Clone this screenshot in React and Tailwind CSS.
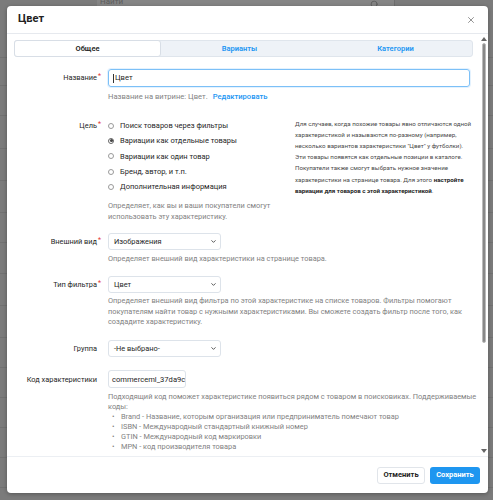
import React from "react";
import { ChevronDown, Search, X } from "lucide-react";

const Req = () => (
  <span className="text-[#e53935] text-[7px] relative top-[-2px] ml-[1px]">*</span>
);

function Label({ children, req, top = "pt-[4px]" }) {
  return (
    <div className={`w-[87px] shrink-0 text-right text-[7.4px] leading-[10px] text-[#262626] ${top}`}>
      {children}
      {req ? <Req /> : <span className="inline-block w-[4px]" />}
    </div>
  );
}

function Select({ value }) {
  return (
    <div className="w-[113px] h-[17px] border border-[#dde3ea] rounded-[3px] flex items-center justify-between pl-[5px] pr-[3px] text-[7.4px] text-[#262626] bg-white">
      <span>{value}</span>
      <ChevronDown size={7} strokeWidth={3} className="text-[#444]" />
    </div>
  );
}

function Radio({ label, checked }) {
  return (
    <div className="h-[15.3px] flex items-center gap-[6px] text-[7.5px] text-[#262626]">
      <span
        className={`w-[6px] h-[6px] rounded-full border flex items-center justify-center ${
          checked ? "border-[#666]" : "border-[#9a9a9a]"
        }`}
      >
        {checked && <span className="w-[3px] h-[3px] rounded-full bg-[#444]" />}
      </span>
      <span>{label}</span>
    </div>
  );
}

const help = "text-[7.4px] text-[#828282]";

export default function App() {
  const rows = [57, 85, 115, 148, 180, 212, 242, 273, 305, 337, 367, 397, 427, 457, 487];

  return (
    <div className="relative w-[493px] h-[500px] overflow-hidden bg-[#7b7b7b] font-['Roboto',sans-serif]">
      {/* page behind the overlay */}
      <div className="flex h-[20px]">
        <div className="w-[97px] bg-[#7b7b7b]" />
        <div className="w-[298px] bg-[#858585] border-r border-[#6e6e6e] flex items-start justify-between px-[3px] text-[8px] text-[#5c5c5c] -mt-[4px]">
          <span>Найти</span>
          <Search size={9} className="mt-[4px] mr-[12px] text-[#555]" />
        </div>
      </div>
      {rows.map((y) => (
        <div key={y} className="absolute left-0 w-[493px] h-px bg-[#717171]" style={{ top: y }} />
      ))}

      {/* modal */}
      <div className="absolute left-[7px] top-[6px] w-[481px] h-[487px] bg-white rounded-[4px] shadow-[0_1px_4px_rgba(0,0,0,0.3)] flex flex-col overflow-hidden">
        <div className="h-[28px] shrink-0 border-b border-[#e6e9ee] flex items-center justify-between pl-[11px] pr-[12px]">
          <span className="text-[11px] font-bold text-[#222]">Цвет</span>
          <X size={10} strokeWidth={1.5} className="text-[#555]" />
        </div>

        <div className="flex-1 min-h-0 flex">
          <div className="flex-1 min-w-0 overflow-hidden pl-[7px] pr-[3px] pt-[6px]">
            {/* tabs */}
            <div className="h-[17px] mr-[4px] grid grid-cols-[145px_159px_1fr] bg-[#eef2f7] border border-[#dfe5ec] rounded-[3px] text-[7.5px] font-semibold">
              <div className="bg-white border border-[#d8dee6] rounded-[3px] flex items-center justify-center text-[#222] -m-px">
                Общее
              </div>
              <div className="flex items-center justify-center text-[#2196f3]">Варианты</div>
              <div className="flex items-center justify-center text-[#2196f3]">Категории</div>
            </div>

            {/* name */}
            <div className="flex gap-[7px] mt-[12px]">
              <Label req>Название</Label>
              <div className="flex-1 pr-[7px]">
                <div className="h-[18px] border border-[#7cc0f7] rounded-[3px] shadow-[0_0_0_1px_rgba(33,150,243,0.12)] flex items-center px-[4px] text-[7.6px] text-[#262626]">
                  <span className="w-px h-[9px] bg-[#333] mr-px" />
                  Цвет
                </div>
                <div className="mt-[4px] text-[7.6px] leading-[11px]">
                  <span className="text-[#828282]">Название на витрине: Цвет.</span>
                  <span className="text-[#2196f3] font-medium ml-[5px]">Редактировать</span>
                </div>
              </div>
            </div>

            {/* purpose */}
            <div className="flex gap-[7px] mt-[16px]">
              <Label req top="pt-[2.6px]">Цель</Label>
              <div className="w-[178px] shrink-0">
                <Radio label="Поиск товаров через фильтры" />
                <Radio label="Вариации как отдельные товары" checked />
                <Radio label="Вариации как один товар" />
                <Radio label="Бренд, автор, и т.п." />
                <Radio label="Дополнительная информация" />
                <p className={`${help} leading-[11px] mt-[5.5px]`}>
                  Определяет, как вы и ваши покупатели смогут использовать эту характеристику.
                </p>
              </div>
              <p className="ml-[2px] text-[6.2px] leading-[11.2px] text-[#4a4a4a] pt-[0.5px] whitespace-nowrap">
                Для случаев, когда похожие товары явно отличаются одной
                <br />
                характеристикой и называются по-разному (например,
                <br />
                несколько вариантов характеристики "Цвет" у футболки).
                <br />
                Эти товары появятся как отдельные позиции в каталоге.
                <br />
                Покупатели также смогут выбрать нужное значение
                <br />
                характеристики на странице товара. Для этого{" "}
                <b className="text-[#222]">настройте</b>
                <br />
                <b className="text-[#222]">вариации для товаров с этой характеристикой</b>.
              </p>
            </div>

            {/* appearance */}
            <div className="flex gap-[7px] mt-[11.5px]">
              <Label req>Внешний вид</Label>
              <div className="flex-1">
                <Select value="Изображения" />
                <p className={`${help} leading-[11px] mt-[2.5px]`}>
                  Определяет внешний вид характеристики на странице товара.
                </p>
              </div>
            </div>

            {/* filter type */}
            <div className="flex gap-[7px] mt-[12.5px]">
              <Label req>Тип фильтра</Label>
              <div className="flex-1 pr-[4px]">
                <Select value="Цвет" />
                <p className={`${help} leading-[10.5px] mt-[2.75px]`}>
                  Определяет внешний вид фильтра по этой характеристике на списке товаров. Фильтры
                  помогают покупателям найти товар с нужными характеристиками. Вы сможете создать
                  фильтр после того, как создадите характеристику.
                </p>
              </div>
            </div>

            {/* group */}
            <div className="flex gap-[7px] mt-[12.75px]">
              <Label>Группа</Label>
              <div className="flex-1">
                <Select value="-Не выбрано-" />
              </div>
            </div>

            {/* code */}
            <div className="flex gap-[7px] mt-[13px]">
              <Label top="pt-[4.5px]">Код характеристики</Label>
              <div className="flex-1">
                <div className="w-[78px] h-[18px] border border-[#dde3ea] rounded-[3px] flex items-center px-[3px] text-[7.6px] text-[#262626] overflow-hidden whitespace-nowrap">
                  commerceml_37da9c2
                </div>
                <div className={`${help} leading-[10px] mt-[4px]`}>
                  <p>
                    Подходящий код поможет характеристике появиться рядом с товаром в поисковиках.
                    Поддерживаемые коды:
                  </p>
                  <ul>
                    {[
                      "Brand - Название, которым организация или предприниматель помечают товар",
                      "ISBN - Международный стандартный книжный номер",
                      "GTIN - Международный код маркировки",
                      "MPN - код производителя товара",
                    ].map((t) => (
                      <li key={t} className="flex">
                        <span className="w-[13px] pl-[4px] shrink-0">•</span>
                        <span>{t}</span>
                      </li>
                    ))}
                  </ul>
                </div>
              </div>
            </div>
          </div>

          {/* scrollbar */}
          <div className="w-[8px] shrink-0 flex flex-col items-center pt-[3px] pb-[3px] gap-[2px]">
            <span className="w-0 h-0 border-l-[3px] border-r-[3px] border-b-[4px] border-l-transparent border-r-transparent border-b-[#666]" />
            <div className="flex-1 w-full flex flex-col">
              <div className="h-[300px] mx-[2px] rounded-[2px] bg-[#888] border border-[#bbb]" />
            </div>
            <span className="w-0 h-0 border-l-[3px] border-r-[3px] border-t-[4px] border-l-transparent border-r-transparent border-t-[#666]" />
          </div>
        </div>

        <div className="h-[37px] shrink-0 border-t border-[#eceff3] flex items-center justify-end gap-[5px] pr-[8px]">
          <button className="w-[48px] h-[17px] rounded-[3px] border border-[#e1e5ea] bg-white text-[7.5px] font-bold text-[#222]">
            Отменить
          </button>
          <button className="w-[50px] h-[17px] rounded-[3px] bg-[#1e96f0] text-[7.5px] font-bold text-white">
            Сохранить
          </button>
        </div>
      </div>
    </div>
  );
}
